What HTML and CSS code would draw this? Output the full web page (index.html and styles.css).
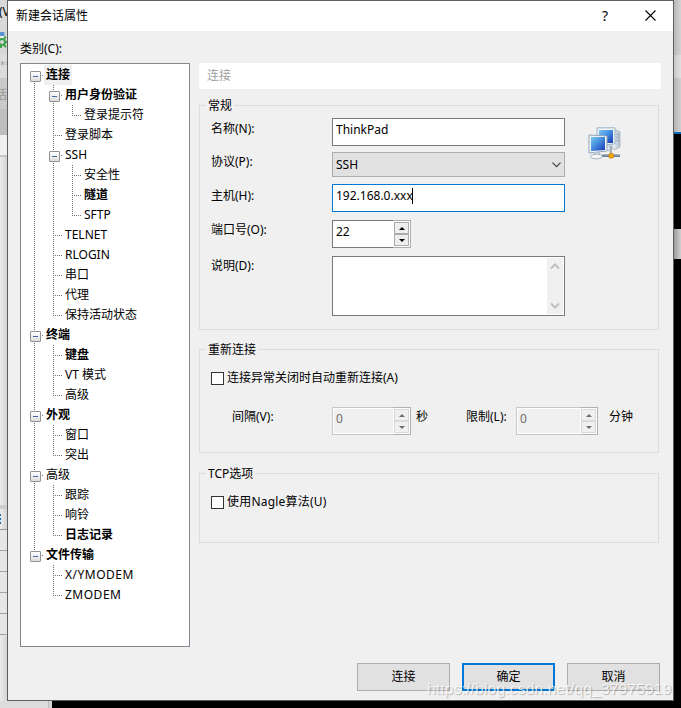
FILE: index.html
```html
<!DOCTYPE html>
<html lang="zh-CN">
<head>
<meta charset="utf-8">
<title>新建会话属性</title>
<link rel="stylesheet" href="styles.css">
</head>
<body>
<div class="desktop">
  <div class="behind-left">
    <div class="bl-menu">(V</div>
    <div class="bl-tool"><svg width="7" height="20" viewBox="0 0 7 20"><path d="M0 0h4.500v4H0z" fill="#5b93cf"/><path d="M0 4h4v2H0z" fill="#e8eef5"/><circle cx="2" cy="10" r="3" fill="none" stroke="#3fa34a" stroke-width="2"/><path d="M4 6l2-1M5 10h2M4 13l2 2M1 14v2" stroke="#3fa34a" stroke-width="2"/></svg></div>
    <div class="bl-stars">**</div>
    <div class="bl-tab">话</div>
    <div class="bl-pane"></div>
    <div class="bl-head"><i></i></div>
    <div class="bl-table"></div>
  </div>

  <div class="dialog">
    <div class="titlebar">
      <span class="title">新建会话属性</span>
      <span class="help">?</span>
      <svg class="close" width="11" height="11" viewBox="0 0 11 11"><path d="M.5.5l10 10M10.500.5l-10 10" stroke="#000" stroke-width="1.100"/></svg>
    </div>
    <div class="body">
      <div class="category">类别(C):</div>
      <div class="columns">
        <div class="tree">
          <div class="row"><i class="g x below"></i><b class="sel">连接</b></div>
          <div class="row"><i class="g v"></i><i class="g x through"></i><b>用户身份验证</b></div>
          <div class="row"><i class="g v"></i><i class="g v"></i><i class="g l"></i><span>登录提示符</span></div>
          <div class="row"><i class="g v"></i><i class="g t"></i><span>登录脚本</span></div>
          <div class="row"><i class="g v"></i><i class="g x through"></i><span>SSH</span></div>
          <div class="row"><i class="g v"></i><i class="g v"></i><i class="g t"></i><span>安全性</span></div>
          <div class="row"><i class="g v"></i><i class="g v"></i><i class="g t"></i><b>隧道</b></div>
          <div class="row"><i class="g v"></i><i class="g v"></i><i class="g l"></i><span>SFTP</span></div>
          <div class="row"><i class="g v"></i><i class="g t"></i><span>TELNET</span></div>
          <div class="row"><i class="g v"></i><i class="g t"></i><span>RLOGIN</span></div>
          <div class="row"><i class="g v"></i><i class="g t"></i><span>串口</span></div>
          <div class="row"><i class="g v"></i><i class="g t"></i><span>代理</span></div>
          <div class="row"><i class="g v"></i><i class="g l"></i><span>保持活动状态</span></div>
          <div class="row"><i class="g x through"></i><b>终端</b></div>
          <div class="row"><i class="g v"></i><i class="g t"></i><b>键盘</b></div>
          <div class="row"><i class="g v"></i><i class="g t"></i><span>VT 模式</span></div>
          <div class="row"><i class="g v"></i><i class="g l"></i><span>高级</span></div>
          <div class="row"><i class="g x through"></i><b>外观</b></div>
          <div class="row"><i class="g v"></i><i class="g t"></i><span>窗口</span></div>
          <div class="row"><i class="g v"></i><i class="g l"></i><span>突出</span></div>
          <div class="row"><i class="g x through"></i><span>高级</span></div>
          <div class="row"><i class="g v"></i><i class="g t"></i><span>跟踪</span></div>
          <div class="row"><i class="g v"></i><i class="g t"></i><span>响铃</span></div>
          <div class="row"><i class="g v"></i><i class="g l"></i><b>日志记录</b></div>
          <div class="row"><i class="g x above"></i><b>文件传输</b></div>
          <div class="row"><i class="g"></i><i class="g t"></i><span class="spaced">X/YMODEM</span></div>
          <div class="row"><i class="g"></i><i class="g l"></i><span class="spaced">ZMODEM</span></div>
        </div>

        <div class="page">
          <div class="page-title">连接</div>

          <fieldset class="general">
            <legend>常规</legend>
            <div class="form">
              <label class="l-name">名称(N):</label>
              <div class="box name">ThinkPad</div>
              <label>协议(P):</label>
              <div class="box select">SSH<svg width="9" height="6" viewBox="0 0 9 6"><path d="M.5.7l4 4 4-4" fill="none" stroke="#444" stroke-width="1.200"/></svg></div>
              <label class="l-host">主机(H):</label>
              <div class="box host">192.168.0.xxx<span class="caret"></span></div>
              <label>端口号(O):</label>
              <div class="spinner"><span class="num">22</span><div class="updown"><span class="btn"><i class="inc"></i></span><span class="btn"><i class="dec"></i></span></div></div>
              <label>说明(D):</label>
              <div class="memo">
                <div class="scroll">
                  <svg width="10" height="7" viewBox="0 0 10 7"><path d="M1 5.500l4-4 4 4" fill="none" stroke="#c0c0c0" stroke-width="2"/></svg>
                  <svg width="10" height="7" viewBox="0 0 10 7"><path d="M1 1.500l4 4 4-4" fill="none" stroke="#c0c0c0" stroke-width="2"/></svg>
                </div>
              </div>
            </div>
            <svg class="net" width="33" height="33" viewBox="0 0 33 33">
              <defs>
                <linearGradient id="scr" x1="0" y1="0" x2="1" y2="1"><stop offset="0" stop-color="#7cc8f0"/><stop offset=".45" stop-color="#4690e0"/><stop offset="1" stop-color="#1836b4"/></linearGradient>
                <linearGradient id="case" x1="0" y1="0" x2="1" y2="0"><stop offset="0" stop-color="#f4f7fa"/><stop offset="1" stop-color="#aebccb"/></linearGradient>
              </defs>
              <path d="M24 3.500l3-1 5 2.500v15l-5 2.500-3-1z" fill="url(#case)" stroke="#a3b1c0" stroke-width=".8"/>
              <path d="M28 7l3 1M28 10l3 1M28 13l3 1" stroke="#8fa0b2" stroke-width=".8"/>
              <path d="M9 .8h18v16L9 19z" fill="#eef3f7" stroke="#9fb2c3" stroke-width="1"/>
              <path d="M11 3h14v13H11z" fill="url(#scr)"/>
              <path d="M15 23l3-5h4v6z" fill="#dce4eb" stroke="#aab8c4" stroke-width=".7"/>
              <path d="M1 8l18 1v15L1 26z" fill="#f3f6f9" stroke="#8fa5b8" stroke-width="1"/>
              <path d="M3 10h14v13L3 24z" fill="url(#scr)"/>
              <path d="M7 25v4M11 25v3" stroke="#b6c3d0" stroke-width="2"/>
              <ellipse cx="8.500" cy="29.500" rx="6" ry="2.300" fill="#f4f6f8" stroke="#a3b1bd" stroke-width="1"/>
              <path d="M14 28.500h18" stroke="#71879b" stroke-width="3"/>
              <path d="M14 27.700h18" stroke="#b5c4d0" stroke-width="1"/>
              <path d="M23 19v8" stroke="#8fa0ae" stroke-width="1.500"/>
              <rect x="21" y="26.500" width="4.500" height="4.500" rx="1" fill="#f6a800" stroke="#c87c18" stroke-width=".8"/>
            </svg>
          </fieldset>

          <fieldset class="reconnect">
            <legend>重新连接</legend>
            <div class="check"><i></i>连接异常关闭时自动重新连接(A)</div>
            <div class="limits">
              <span class="cap-int">间隔(V):</span>
              <div class="spinner off"><span class="num">0</span><div class="updown"><span class="btn"><i class="inc"></i></span><span class="btn"><i class="dec"></i></span></div></div>
              <span class="cap-sec">秒</span>
              <span class="cap-lim">限制(L):</span>
              <div class="spinner off wide"><span class="num">0</span><div class="updown"><span class="btn"><i class="inc"></i></span><span class="btn"><i class="dec"></i></span></div></div>
              <span class="cap-min">分钟</span>
            </div>
          </fieldset>

          <fieldset class="tcp">
            <legend>TCP选项</legend>
            <div class="check nagle"><i></i>使用Nagle算法(U)</div>
          </fieldset>
        </div>
      </div>
      <div class="actions">
        <button>连接</button>
        <button class="primary">确定</button>
        <button>取消</button>
      </div>
    </div>
  </div>

  <div class="behind-right"><div class="br-a"></div><div class="br-b"></div><div class="br-a2"></div><div class="br-blue"></div><div class="br-k"></div><div class="br-thumb"></div></div>
  <div class="behind-bottom"></div>
</div>
<div class="watermark">https://blog.csdn.net/qq_37975919</div>
</body>
</html>
```
FILE: styles.css
```css
* { box-sizing: border-box; }
body {
  margin: 0;
  width: 681px;
  height: 708px;
  overflow: hidden;
  position: relative;
  font: 12px/20px "Noto Sans", "Noto Sans CJK SC", sans-serif;
  color: #000;
}
.desktop {
  display: grid;
  grid-template-columns: 7px 667px 7px;
  grid-template-rows: 701px 7px;
  background: #000;
}

/* strips of the window underneath */
.behind-left {
  display: flex;
  flex-direction: column;
  overflow: hidden;
  background: linear-gradient(90deg, #ececec, #d4d4d4);
}
.behind-left > div { flex: none; overflow: hidden; white-space: nowrap; }
.bl-menu { height: 32px; padding-top: 2px; background: #d9d9d9; text-indent: -1px; }
.bl-tool { height: 23px; background: #d7d7d7; }
.bl-tool svg { display: block; }
.bl-stars { height: 23px; background: #dcdcdc; color: #999; font-size: 9px; }
.bl-tab { height: 57px; padding-top: 7px; background: linear-gradient(#c9c9c9 0 31px, #bebebe 31px); color: #999; direction: rtl; }
.bl-pane { height: 371px; background: linear-gradient(#f0f0f0 0 20px, #c8c8c8 20px 22px, transparent 22px 370px, #ccc 370px); }
.bl-head { height: 24px; padding-top: 5px; border-bottom: 1px solid #999; border-top: 3px solid #ccc; }
.bl-head i { display: block; width: 1px; height: 10px; background: repeating-linear-gradient(#246cae 0 2px, #bdeaf5 2px 4px); }
.bl-table { height: 106px; background: repeating-linear-gradient(#e6e6e6 0 20px, #a2a2a2 20px 21px); }
.behind-right { display: flex; flex-direction: column; background: #000; }
.br-a { height: 55px; background: linear-gradient(90deg, #b8b8b8, #d4d4d4); }
.br-b { height: 23px; background: linear-gradient(90deg, #c8c8c8, #e1e1e1); }
.br-a2 { height: 54px; background: linear-gradient(90deg, #b4b4b4, #d0d0d0); }
.br-blue { height: 2px; background: #0a6cb8; }
.br-k { height: 95px; }
.br-thumb { height: 30px; background: linear-gradient(90deg, #9a9a9a, #d0d0d0); }
.behind-bottom {
  grid-column: 1 / 4;
  background: linear-gradient(90deg, #dcdcdc 0 48px, #bdbdbd 48px 49px, #d6d6d6 49px 52px, #000 52px);
}

.dialog {
  display: flex;
  flex-direction: column;
  background: #f0f0f0;
  border: 1px solid #5f5f5f;
}
.titlebar {
  display: flex;
  align-items: center;
  height: 30px;
  padding: 0 17px 0 8px;
  background: #fff;
}
.title { flex: 1; }
.help { width: 8px; margin-right: 36px; font-size: 14px; text-align: center; }
.close { margin-top: -2px; }
.body { padding: 8px 12px 0; }
.category { height: 24px; }
.columns { display: flex; gap: 9px; }

.tree {
  width: 170px;
  height: 584px;
  padding: 1px 0 0 4px;
  background: #fff;
  border: 1px solid #828790;
}
.row { display: flex; height: 20px; white-space: nowrap; }
.row span, .row b { padding: 0 2px; }
.row .spaced { letter-spacing: .5px; }
.sel { background: #f0f0f0; }
.g {
  --v: repeating-linear-gradient(#707070 0 1px, transparent 1px 2px);
  --h: repeating-linear-gradient(90deg, #707070 0 1px, transparent 1px 2px);
  flex: none;
  width: 19px;
  height: 20px;
  background-repeat: no-repeat;
}
.v { background-image: var(--v); background-size: 1px 20px; background-position: 9px 0; }
.t { background-image: var(--v), var(--h); background-size: 1px 20px, 9px 1px; background-position: 9px 0, 9px 10px; }
.l { background-image: var(--v), var(--h); background-size: 1px 11px, 9px 1px; background-position: 9px 0, 9px 10px; }
/* a middle guide column only continues below an expander that has later siblings */
.x { padding: 6px 0 0 5px; }
.x.above { background-image: var(--h), var(--v); background-size: 3px 1px, 1px 6px; background-position: 15px 10px, 9px 0; }
.x.below { background-image: var(--h), var(--v); background-size: 3px 1px, 1px 4px; background-position: 15px 10px, 9px 16px; }
.x.through { background-image: var(--h), var(--v); background-size: 3px 1px, 1px 20px; background-position: 15px 10px, 9px 0; }
.x::before {
  content: "";
  display: block;
  width: 9px;
  height: 9px;
  border: 1px solid #919191;
  border-radius: 1px;
  background: linear-gradient(#4b63a7, #4b63a7) center / 5px 1px no-repeat, linear-gradient(#fff, #dedede);
}

.page { width: 462px; }
.page-title { height: 26px; padding: 3px 8px; background: #fff; color: #a0a0a0; }

fieldset { width: 460px; margin: 0; padding: 0; border: 1px solid #dcdcdc; min-width: 0; }
legend { height: 15px; margin-left: 6px; padding: 0 2px; line-height: 15px; }
.general { display: flex; align-items: flex-start; height: 232px; margin-top: 9px; }
.form {
  display: grid;
  grid-template-columns: 121px 233px;
  grid-template-rows: 34px 32px 36px 36px 60px;
  padding: 5px 0 0 11px;
}
.l-name { margin-top: 1px; }
.l-host { margin-top: 2px; }
.box { display: flex; align-items: center; height: 28px; padding: 0 3px; background: #fff; border: 1px solid #7a7a7a; }
.name, .host { padding-bottom: 4px; }
.box.select { height: 25px; justify-content: space-between; background: #e1e1e1; border-color: #adadad; }
.box.host { border-color: #0078d7; }
.caret { width: 1px; height: 16px; margin-left: -1px; background: #000; }
.spinner { display: flex; width: 79px; height: 28px; background: #fff; border: 1px solid #7a7a7a; border-right: 0; }
.num { flex: 1; padding: 1px 3px; }
.updown { width: 18px; height: 28px; margin-top: -1px; padding: 1px; background: #fff; border: 1px solid #adadad; border-left: 0; }
.btn { display: flex; align-items: center; justify-content: center; width: 15px; height: 12px; background: #eee; border: 1px solid #acacac; }
.inc, .dec { width: 0; height: 0; border: 3px solid transparent; }
.inc { border-top: 0; border-bottom-color: #000; }
.dec { border-bottom: 0; border-top-color: #000; }
.off { background: #f0f0f0; border-color: #c8c8c8; color: #6d6d6d; box-shadow: inset 0 0 0 1px #fff; }
.off .updown { border-color: #b0b0b8; }
.off .btn { background: #f0f0f0; border-color: #d9d9d9; }
.off .inc { border-bottom-color: #6d6d6d; }
.off .dec { border-top-color: #6d6d6d; }
.wide { width: 82px; }
.memo { display: flex; justify-content: flex-end; padding: 1px; background: #fff; border: 1px solid #7a7a7a; }
.scroll { display: flex; flex-direction: column; justify-content: space-between; align-items: center; width: 16px; padding: 5px 0; background: #f0f0f0; }
.net { margin: 14px 0 0 23px; }

.reconnect { height: 111px; margin-top: 12px; }
.check { display: flex; align-items: center; gap: 3px; height: 20px; margin: 11px 0 0 11px; }
.check i { width: 13px; height: 13px; background: #fff; border: 1px solid #333; }
.nagle { letter-spacing: .2px; }
.limits { display: flex; margin: 19px 0 0 32px; }
.limits span[class^="cap"] { flex: none; white-space: nowrap; }
.cap-int { width: 100px; }
.cap-sec { width: 50px; margin-left: 5px; }
.cap-lim { width: 50px; }
.cap-min { margin-left: 11px; }
.tcp { height: 77px; margin-top: 13px; }

.actions { display: flex; justify-content: flex-end; gap: 12px; margin: 16px 1px 0 0; }
.actions button { width: 93px; height: 28px; padding: 0; font: inherit; color: #000; background: #e1e1e1; border: 1px solid #adadad; }
.actions .primary { border: 2px solid #0078d7; }

.watermark {
  position: absolute;
  left: 427px;
  top: 679px;
  font: 15.500px/20px "Liberation Sans", sans-serif;
  letter-spacing: .2px;
  white-space: nowrap;
  color: rgba(255,255,255,.75);
  text-shadow: 1px 1px 1px rgba(0,0,0,.25);
}
```
